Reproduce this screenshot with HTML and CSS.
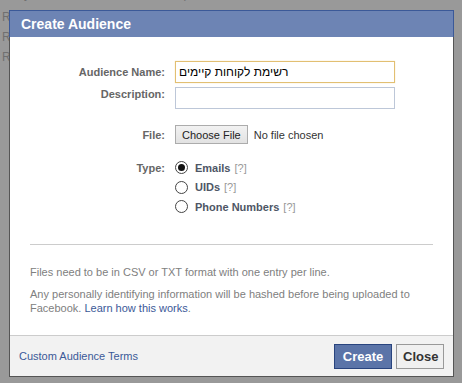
FILE: index.html
```html
<!DOCTYPE html>
<html lang="en">
<head>
    <meta charset="UTF-8">
    <title>Create Audience</title>
    <link rel="stylesheet" href="styles.css">
</head>
<body>
<div class="page">
    <div class="feed">
        <div class="feed-row feed-top"><span class="who">Everybody</span><span class="when">05/05/13 10:45 pm</span></div>
        <div class="feed-row">R</div>
        <div class="feed-row">R</div>
        <div class="feed-row">R</div>
    </div>

    <div class="dialog">
        <div class="dialog-title">Create Audience</div>
        <div class="dialog-body">
            <div class="form">
                <label class="label name-label">Audience Name:</label>
                <input class="text focused" type="text" value="רשימת לקוחות קיימים">

                <label class="label desc-label">Description:</label>
                <input class="text desc" type="text">

                <label class="label file-label">File:</label>
                <input class="file" type="file">

                <label class="label type-label">Type:</label>
                <div class="types">
                    <label class="opt"><input type="radio" name="type" checked> <b>Emails</b> <span class="help">[?]</span></label>
                    <label class="opt"><input type="radio" name="type"> <b>UIDs</b> <span class="help">[?]</span></label>
                    <label class="opt"><input type="radio" name="type"> <b>Phone Numbers</b> <span class="help">[?]</span></label>
                </div>
            </div>

            <div class="divider"></div>

            <p class="note">Files need to be in CSV or TXT format with one entry per line.</p>
            <p class="note">Any personally identifying information will be hashed before being uploaded to Facebook. <a href="javascript:">Learn how this works</a>.</p>
        </div>
        <div class="dialog-foot">
            <a href="javascript:" class="terms">Custom Audience Terms</a>
            <div class="buttons">
                <button class="btn btn-blue">Create</button>
                <button class="btn btn-gray">Close</button>
            </div>
        </div>
    </div>
</div>
</body>
</html>
```

FILE: styles.css
```css
*{
    padding: 0;
    margin: 0;
    box-sizing: border-box;
}
body{
    background: #999999;
    font-family: "Liberation Sans", Arial, sans-serif;
    font-size: 11px;
    color: #666666;
    overflow: hidden;
}
a{
    color: #3b5998;
    text-decoration: none;
}
.page{
    position: relative;
    width: 462px;
    height: 383px;
    overflow: hidden;
}
.feed{
    margin-top: -13px;
    color: #707070;
}
.feed-row{
    height: 20px;
    line-height: 20px;
    padding-left: 2px;
    font-size: 12px;
    white-space: nowrap;
}
.feed-top{
    line-height: 14px;
}
.feed-row .who{
    display: inline-block;
    width: 28px;
    text-align: right;
    overflow: hidden;
    direction: rtl;
    vertical-align: top;
}
.feed-row .when{
    margin-left: 70px;
}

/* dialog lies over the page */
.dialog{
    position: absolute;
    left: 9px;
    top: 10px;
    width: 445px;
    border: 1px solid #555555;
    border-top: 0;
    background: #ffffff;
}
.dialog-title{
    height: 27px;
    line-height: 27px;
    background: #6d84b4;
    border: 1px solid #3b5998;
    border-bottom: 0;
    margin: 0 -1px;
    padding-left: 11px;
    color: #ffffff;
    font-size: 14px;
    font-weight: bold;
}
.dialog-body{
    height: 298px;
    padding: 24px 20px 0;
}
.form{
    display: grid;
    grid-template-columns: 135px 220px;
    column-gap: 10px;
    align-items: start;
}
.label{
    text-align: right;
    font-weight: bold;
    color: #666666;
    line-height: 14px;
}
.name-label{
    padding-top: 4px;
}
.desc-label{
    margin-top: 4px;
    padding-top: 0;
}
.file-label{
    margin-top: 16px;
    padding-top: 3px;
}
.type-label{
    margin-top: 14px;
    padding-top: 3px;
}
.text{
    width: 220px;
    height: 22px;
    border: 1px solid #bdc7d8;
    padding: 0 3px;
    font-family: "Liberation Sans", Arial, sans-serif;
    font-size: 12px;
    color: #000000;
    outline: none;
}
.text.focused{
    border-color: #e2bf72;
    box-shadow: 0 0 1px #f0d9a8;
}
.desc{
    margin-top: 4px;
}
.file{
    margin-top: 16px;
    font-family: "Liberation Sans", Arial, sans-serif;
    font-size: 11px;
    color: #333333;
    height: 19px;
}
.file::file-selector-button{
    height: 19px;
    padding: 0 6px;
    margin-right: 6px;
    border: 1px solid #acacac;
    border-radius: 0;
    background: linear-gradient(#f2f2f2, #e2e2e2);
    font-family: "Liberation Sans", Arial, sans-serif;
    font-size: 11px;
    color: #222222;
}
.types{
    margin-top: 14px;
}
.opt{
    display: flex;
    align-items: center;
    height: 19.5px;
    color: #4e5665;
}
.opt b{
    margin-left: 7px;
    margin-right: 4px;
}
.opt input{
    appearance: none;
    width: 13px;
    height: 13px;
    margin: 0;
    border: 1px solid #444444;
    border-radius: 50%;
    background: #ffffff;
    position: relative;
}
.opt input:checked::after{
    content: "";
    position: absolute;
    left: 2px;
    top: 2px;
    width: 7px;
    height: 7px;
    border-radius: 50%;
    background: #111111;
}
.help{
    color: #999999;
}
.divider{
    margin-top: 27px;
    height: 1px;
    background: #cccccc;
}
.note{
    margin-top: 20px;
    line-height: 14px;
    color: #808080;
    padding-right: 20px;
}
.note + .note{
    margin-top: 8px;
}
.dialog-foot{
    height: 41px;
    border-top: 1px solid #cccccc;
    background: #f2f2f2;
    display: flex;
    align-items: center;
    justify-content: space-between;
    padding: 0 9px;
}
.terms{
    font-size: 11px;
}
.buttons{
    display: flex;
    gap: 4px;
    margin-top: 1px;
}
.btn{
    height: 25px;
    padding: 0 6px;
    font-family: "Liberation Sans", Arial, sans-serif;
    font-size: 13px;
    font-weight: bold;
    cursor: pointer;
}
.btn-blue{
    width: 58px;
    background: #5b74a8;
    border: 1px solid #29447e;
    color: #ffffff;
}
.btn-gray{
    width: 48px;
    background: #f0f0f0;
    border: 1px solid #999999;
    color: #333333;
}
```
